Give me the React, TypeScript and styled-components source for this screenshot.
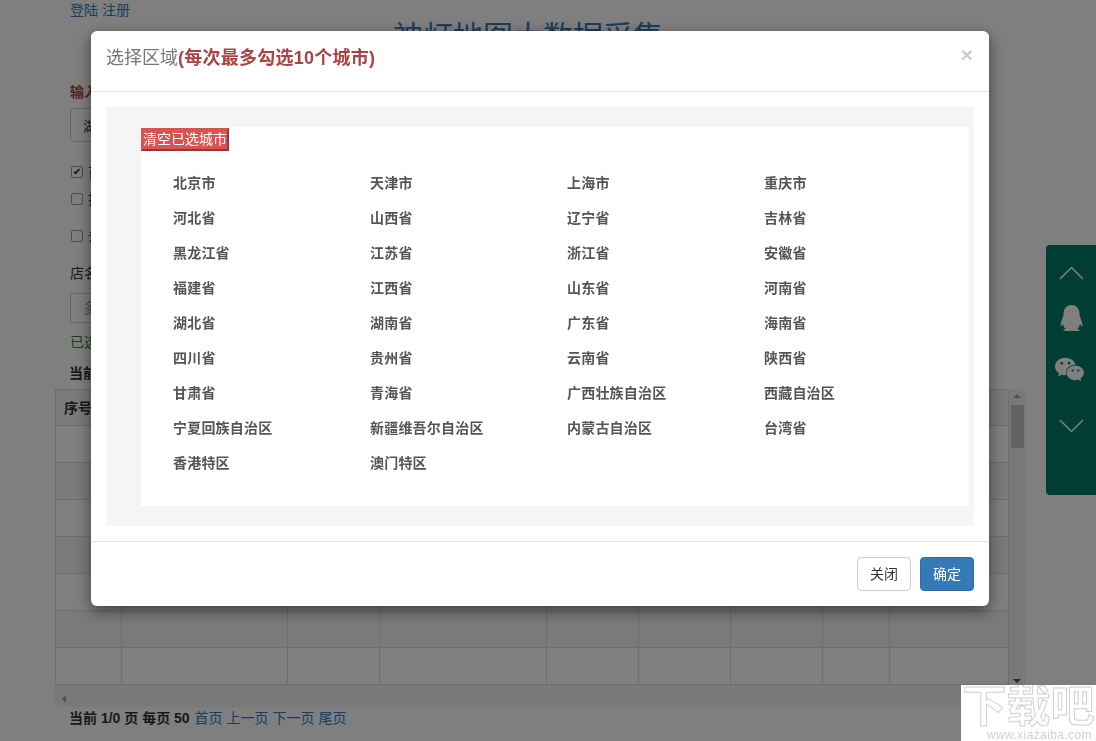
import React from 'react';
import styled, { createGlobalStyle } from 'styled-components';
import { FaQq, FaWeixin } from 'react-icons/fa';

const GlobalStyle = createGlobalStyle`
  html, body {
    margin: 0;
    padding: 0;
    height: 741px;
    overflow: hidden;
    background: #fff;
  }
  body, button, input {
    font-family: "Liberation Sans", "Noto Sans CJK SC", sans-serif;
    font-size: 14px;
    line-height: 20px;
    color: #333;
  }
`;

const Page = styled.div`
  padding-left: 69px;
  height: 741px;
  overflow: hidden;
`;

const TopLinks = styled.div`
  height: 20px;
  padding-left: 1px;
  display: flex;
  gap: 4px;
`;

const Link = styled.a`
  color: #337ab7;
`;

const PageTitle = styled.h1`
  margin: 0 0 29px;
  width: 918px;
  font-size: 30px;
  line-height: 33px;
  font-weight: 400;
  text-align: center;
  color: #337ab7;
`;

const FieldLabel = styled.label`
  display: block;
  padding-left: 1px;
  font-weight: 700;
  color: #a94442;
`;

const TextInput = styled.input<{ $h: number; $top: number }>`
  display: block;
  box-sizing: border-box;
  width: 400px;
  height: ${(p) => p.$h}px;
  margin: ${(p) => p.$top}px 0 0 1px;
  padding: 6px 12px;
  border: 1px solid #ccc;
  border-radius: 4px;
  &::placeholder { color: #999; }
`;

const CheckRow = styled.label<{ $top: number }>`
  display: flex;
  align-items: center;
  height: 20px;
  margin-top: ${(p) => p.$top}px;
`;

const CheckBox = styled.input`
  appearance: none;
  position: relative;
  box-sizing: border-box;
  margin: 0 5px 0 2px;
  width: 12px;
  height: 12px;
  background: #fff;
  border: 1px solid #999;
  border-radius: 2px;
  &:checked::after {
    content: '✔';
    position: absolute;
    left: 1px;
    top: -5px;
    font-size: 10px;
    color: #222;
  }
`;

const ShopLabel = styled.div`
  margin-top: 17px;
  padding-left: 1px;
`;

const Saved = styled.div`
  margin-top: 9px;
  padding-left: 1px;
  color: #3c763d;
`;

const Current = styled.div`
  margin-top: 11px;
  font-weight: 700;
`;

const TableBox = styled.div`
  margin: 6px 0 0 -14px;
  width: 970px;
`;

const TableRow = styled.div`
  display: flex;
`;

const DataTable = styled.table`
  width: 953px;
  table-layout: fixed;
  border-collapse: collapse;
  flex: none;
  align-self: flex-start;
  th, td {
    box-sizing: border-box;
    border: 1px solid #ddd;
    padding: 0 8px;
    text-align: left;
  }
  th { height: 36px; font-weight: 700; background: #f5f5f5; }
  td { height: 37px; }
  tbody tr:nth-child(even) td { background: #f5f5f5; }
`;

const VerticalTrack = styled.div`
  width: 17px;
  height: 296px;
  background: #f3f3f3;
  display: flex;
  flex-direction: column;
  align-items: center;
`;

const ArrowUp = styled.div`
  margin-top: 5px;
  border: 4px solid transparent;
  border-top: 0;
  border-bottom: 4px solid #a3a3a3;
`;

const ArrowDown = styled.div`
  margin-top: auto;
  margin-bottom: 2px;
  border: 4px solid transparent;
  border-bottom: 0;
  border-top: 4px solid #505050;
`;

const Thumb = styled.div`
  margin-top: 7px;
  width: 13px;
  height: 43px;
  background: #c4c4c4;
`;

const HorizontalTrack = styled.div`
  width: 970px;
  height: 22px;
  background: #f3f3f3;
  display: flex;
  align-items: center;
  padding-left: 7px;
  box-sizing: border-box;
`;

const ArrowLeft = styled.div`
  border: 4px solid transparent;
  border-left: 0;
  border-right: 4px solid #a3a3a3;
  margin-top: 6px;
`;

const Pager = styled.div`
  margin-top: 1px;
  font-weight: 700;
  display: flex;
  gap: 4px;
  a { font-weight: 400; }
  span { margin-right: 1px; }
`;

const SidePanel = styled.div`
  position: fixed;
  left: 1046px;
  top: 245px;
  right: 0;
  height: 250px;
  background: #007a65;
  border-radius: 4px 0 0 4px;
  display: flex;
  flex-direction: column;
  align-items: center;
  color: #fff;
  padding: 21px 0 0;
  box-sizing: border-box;
`;

const Chevron = styled.svg<{ $top?: number }>`
  display: block;
  width: 25px;
  height: 14px;
  fill: none;
  stroke: #fff;
  stroke-width: 1.5;
  margin-top: ${(p) => p.$top ?? 0}px;
`;

const QqIcon = styled(FaQq)`
  display: block;
  width: 25px;
  height: 26px;
  margin-top: 25px;
`;

const WechatIcon = styled(FaWeixin)`
  display: block;
  width: 31px;
  height: 27px;
  margin: 25px 0 0 -4px;
`;

const Backdrop = styled.div`
  position: fixed;
  inset: 0;
  background: rgba(0, 0, 0, 0.5);
  display: flex;
  justify-content: center;
  align-items: flex-start;
  padding: 31px 16px 0 0;
`;

const Modal = styled.div`
  width: 898px;
  background: #fff;
  border-radius: 6px;
  box-shadow: 0 5px 15px rgba(0, 0, 0, 0.5);
`;

const ModalHeader = styled.div`
  height: 60px;
  box-sizing: border-box;
  padding: 15px;
  display: flex;
  justify-content: space-between;
`;

const ModalTitle = styled.h4`
  margin: 0;
  font-size: 18px;
  line-height: 25px;
  font-weight: 400;
  color: #777;
  b { color: #a94442; letter-spacing: 0.25px; }
`;

const CloseX = styled.span`
  font-size: 21px;
  line-height: 18px;
  margin-right: 1px;
  font-weight: 700;
  color: #ccc;
`;

const ModalBody = styled.div`
  border-top: 1px solid #e5e5e5;
  padding: 15px;
`;

const GreyPanel = styled.div`
  background: #f5f5f5;
  padding: 20px 5px 20px 35px;
`;

const WhitePanel = styled.div`
  background: #fff;
  height: 379px;
  padding-top: 1px;
  box-sizing: border-box;
`;

const ClearButton = styled.button`
  display: block;
  width: 88px;
  height: 23px;
  padding: 0;
  background: #d9534f;
  color: #fff;
  border: 2px solid;
  border-color: #d9534f #9e3532 #9e3532 #d9534f;
  line-height: 19px;
`;

const CityGrid = styled.div`
  display: grid;
  grid-template-columns: repeat(4, 197px);
  grid-auto-rows: 35px;
  align-items: center;
  padding: 14px 0 0 32px;
`;

const City = styled.span`
  font-weight: 700;
  color: #555;
  line-height: 20px;
  letter-spacing: 0.2px;
`;

const ModalFooter = styled.div`
  border-top: 1px solid #e5e5e5;
  padding: 15px;
  display: flex;
  justify-content: flex-end;
  gap: 9px;
`;

const FooterButton = styled.button<{ $primary?: boolean }>`
  width: 54px;
  height: 34px;
  padding: 0;
  border-radius: 4px;
  border: 1px solid ${(p) => (p.$primary ? '#2e6da4' : '#ccc')};
  background: ${(p) => (p.$primary ? '#337ab7' : '#fff')};
  color: ${(p) => (p.$primary ? '#fff' : '#333')};
`;

const Watermark = styled.div`
  position: fixed;
  left: 961px;
  top: 685px;
  right: 0;
  bottom: 0;
  background: #fff;
  overflow: hidden;
`;

const WatermarkName = styled.div`
  font-size: 44px;
  line-height: 44px;
  font-weight: 700;
  text-align: center;
  color: #fff;
  -webkit-text-stroke: 1px #d0d0d0;
`;

const WatermarkUrl = styled.div`
  font-size: 12px;
  line-height: 12px;
  padding-right: 4px;
  text-align: right;
  color: #d0d0d0;
  letter-spacing: 0.4px;
`;

const columns = [66, 166, 92, 167, 92, 92, 92, 67, 119];

const cities = [
  '北京市', '天津市', '上海市', '重庆市',
  '河北省', '山西省', '辽宁省', '吉林省',
  '黑龙江省', '江苏省', '浙江省', '安徽省',
  '福建省', '江西省', '山东省', '河南省',
  '湖北省', '湖南省', '广东省', '海南省',
  '四川省', '贵州省', '云南省', '陕西省',
  '甘肃省', '青海省', '广西壮族自治区', '西藏自治区',
  '宁夏回族自治区', '新疆维吾尔自治区', '内蒙古自治区', '台湾省',
  '香港特区', '澳门特区',
];

export default function App() {
  return (
    <>
      <GlobalStyle />
      <Page>
        <TopLinks>
          <Link>登陆</Link>
          <Link>注册</Link>
        </TopLinks>
        <PageTitle>神灯地图大数据采集</PageTitle>
        <FieldLabel>输入关键词</FieldLabel>
        <TextInput $h={34} $top={6} defaultValue="湖南" />
        <CheckRow $top={20}><CheckBox type="checkbox" defaultChecked />首页</CheckRow>
        <CheckRow $top={7}><CheckBox type="checkbox" />按区域</CheckRow>
        <CheckRow $top={17}><CheckBox type="checkbox" />去重</CheckRow>
        <ShopLabel>店名</ShopLabel>
        <TextInput $h={30} $top={10} placeholder="多个" />
        <Saved>已选</Saved>
        <Current>当前</Current>
        <TableBox>
          <TableRow>
            <DataTable>
              <colgroup>
                {columns.map((w, i) => <col key={i} width={w} />)}
              </colgroup>
              <thead>
                <tr>
                  <th>序号</th>
                  {columns.slice(1).map((_, i) => <th key={i} />)}
                </tr>
              </thead>
              <tbody>
                {[0, 1, 2, 3, 4, 5, 6].map((r) => (
                  <tr key={r}>
                    {columns.map((_, i) => <td key={i} />)}
                  </tr>
                ))}
              </tbody>
            </DataTable>
            <VerticalTrack>
              <ArrowUp />
              <Thumb />
              <ArrowDown />
            </VerticalTrack>
          </TableRow>
          <HorizontalTrack><ArrowLeft /></HorizontalTrack>
        </TableBox>
        <Pager>
          <span>当前 1/0 页 每页 50</span>
          <Link>首页</Link>
          <Link>上一页</Link>
          <Link>下一页</Link>
          <Link>尾页</Link>
        </Pager>
      </Page>
      <SidePanel>
        <Chevron viewBox="0 0 25 14"><polyline points="1,13 12.5,1.5 24,13" /></Chevron>
        <QqIcon />
        <WechatIcon />
        <Chevron viewBox="0 0 25 14" $top={36}><polyline points="1,1 12.5,12.5 24,1" /></Chevron>
      </SidePanel>
      <Backdrop>
        <Modal>
          <ModalHeader>
            <ModalTitle>选择区域<b>(每次最多勾选10个城市)</b></ModalTitle>
            <CloseX>×</CloseX>
          </ModalHeader>
          <ModalBody>
            <GreyPanel>
              <WhitePanel>
                <ClearButton>清空已选城市</ClearButton>
                <CityGrid>
                  {cities.map((c) => <City key={c}>{c}</City>)}
                </CityGrid>
              </WhitePanel>
            </GreyPanel>
          </ModalBody>
          <ModalFooter>
            <FooterButton>关闭</FooterButton>
            <FooterButton $primary>确定</FooterButton>
          </ModalFooter>
        </Modal>
      </Backdrop>
      <Watermark>
        <WatermarkName>下载吧</WatermarkName>
        <WatermarkUrl>www.xiazaiba.com</WatermarkUrl>
      </Watermark>
    </>
  );
}
